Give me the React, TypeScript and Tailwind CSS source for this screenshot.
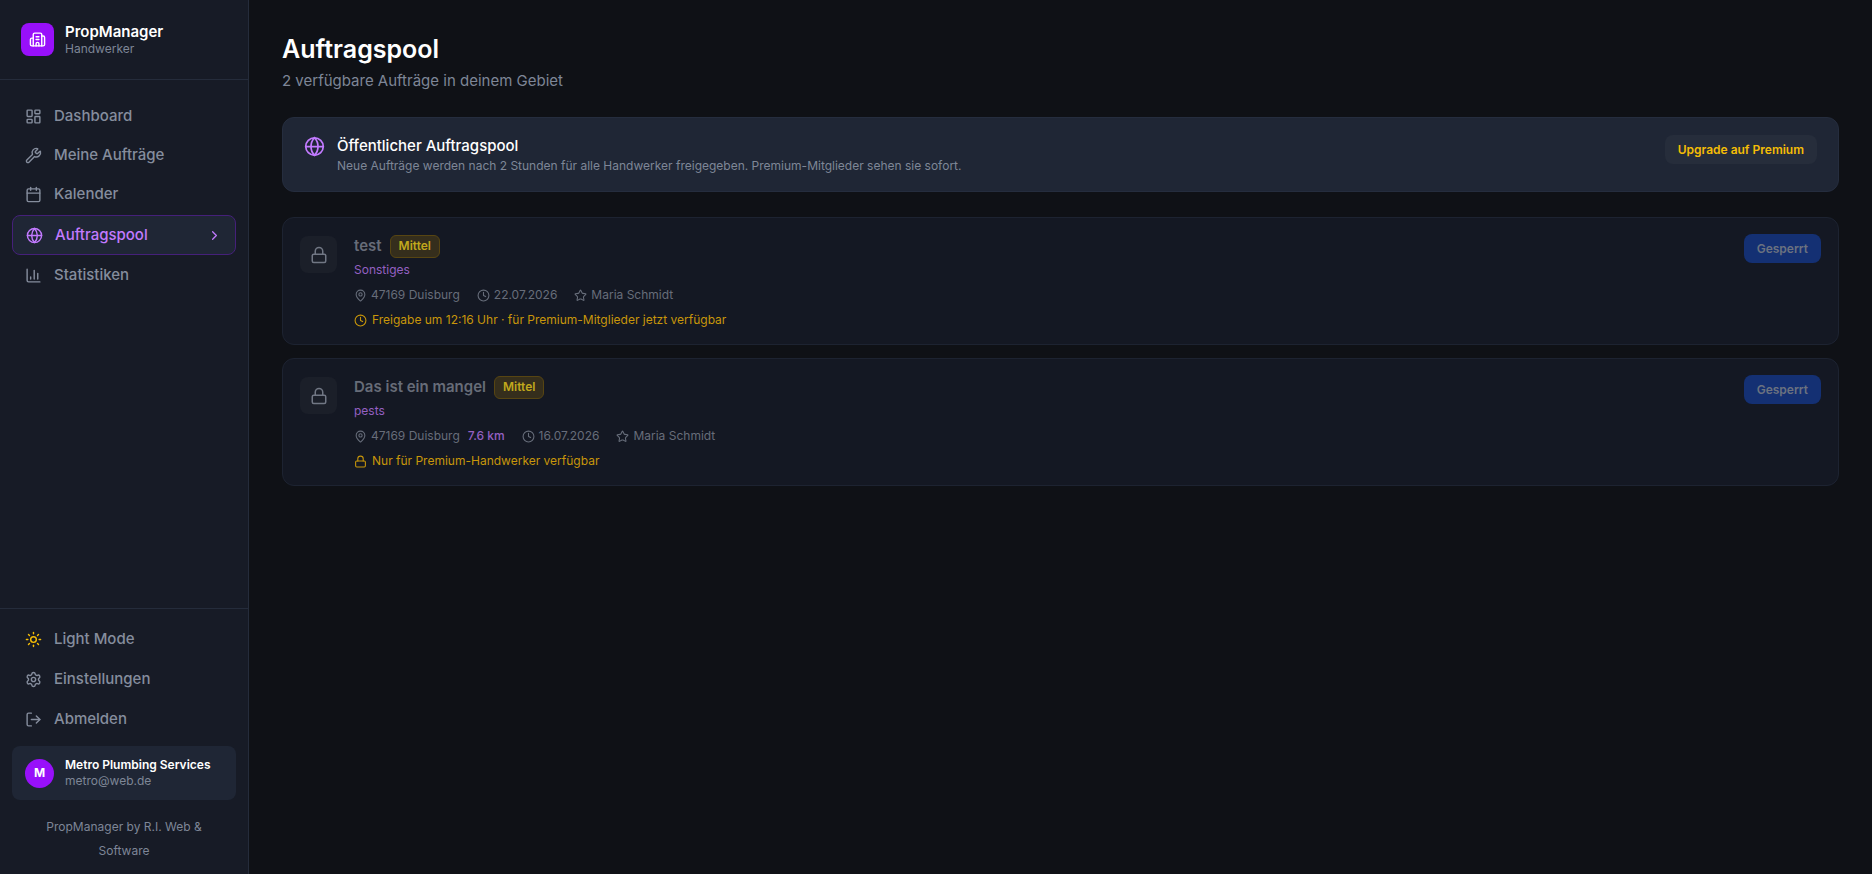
import type { ReactNode } from "react";
import {
  Building2,
  Calendar,
  ChartColumn,
  ChevronRight,
  Clock,
  Globe,
  LayoutDashboard,
  Lock,
  LogOut,
  MapPin,
  Settings,
  Star,
  Sun,
  Wrench,
} from "lucide-react";
import type { LucideIcon } from "lucide-react";

type NavEntry = { label: string; icon: LucideIcon; active?: boolean };

const navigation: NavEntry[] = [
  { label: "Dashboard", icon: LayoutDashboard },
  { label: "Meine Aufträge", icon: Wrench },
  { label: "Kalender", icon: Calendar },
  { label: "Auftragspool", icon: Globe, active: true },
  { label: "Statistiken", icon: ChartColumn },
];

type Job = {
  title: string;
  priority: string;
  category: string;
  place: string;
  distance?: string;
  date: string;
  client: string;
  noticeIcon: LucideIcon;
  notice: string;
};

const jobs: Job[] = [
  {
    title: "test",
    priority: "Mittel",
    category: "Sonstiges",
    place: "47169 Duisburg",
    date: "22.07.2026",
    client: "Maria Schmidt",
    noticeIcon: Clock,
    notice: "Freigabe um 12:16 Uhr · für Premium-Mitglieder jetzt verfügbar",
  },
  {
    title: "Das ist ein mangel",
    priority: "Mittel",
    category: "pests",
    place: "47169 Duisburg",
    distance: "7.6 km",
    date: "16.07.2026",
    client: "Maria Schmidt",
    noticeIcon: Lock,
    notice: "Nur für Premium-Handwerker verfügbar",
  },
];

function NavLink({ label, icon: Icon, active }: NavEntry) {
  if (active) {
    return (
      <a
        href="#"
        aria-current="page"
        className="flex h-10 items-center gap-3 rounded-lg border border-[#45207a] bg-[#1f2635] px-[13px] text-[15px] font-medium text-[#c27aff]"
      >
        <Icon size={17} />
        <span className="flex-1">{label}</span>
        <ChevronRight size={15} />
      </a>
    );
  }
  return (
    <a href="#" className="flex h-[37px] items-center gap-3 rounded-lg px-[13px] text-[15px] font-medium text-[#858d9d]">
      <Icon size={17} />
      <span>{label}</span>
    </a>
  );
}

function ActionButton({ icon, children }: { icon: ReactNode; children: ReactNode }) {
  return (
    <button
      type="button"
      className="flex h-[37px] items-center gap-3 rounded-lg px-[13px] text-left text-[15px] font-medium text-[#858d9d]"
    >
      {icon}
      <span>{children}</span>
    </button>
  );
}

function Sidebar() {
  return (
    <aside className="flex w-[249px] shrink-0 flex-col border-r border-[#252c3b] bg-[#171b26]">
      <div className="flex h-20 items-center gap-[11px] border-b border-[#252c3b] px-[21px]">
        <div className="flex size-[33px] items-center justify-center rounded-lg bg-[#9810fa] text-white">
          <Building2 size={17} />
        </div>
        <div>
          <p className="text-[15px] leading-[18px] font-semibold text-white">PropManager</p>
          <p className="text-xs leading-4 text-[#7e8697]">Handwerker</p>
        </div>
      </div>

      <nav className="flex flex-1 flex-col gap-[2px] px-3 pt-[18px]">
        {navigation.map((entry) => (
          <NavLink key={entry.label} {...entry} />
        ))}
      </nav>

      <div className="flex flex-col gap-[3px] border-t border-[#252c3b] px-3 pt-3 pb-[11px]">
        <ActionButton icon={<Sun size={17} className="text-[#f5bd05]" />}>Light Mode</ActionButton>
        <ActionButton icon={<Settings size={17} />}>Einstellungen</ActionButton>
        <ActionButton icon={<LogOut size={17} />}>Abmelden</ActionButton>
        <div className="mt-[5px] flex h-[54px] items-center gap-[11px] rounded-lg bg-[#1f2635] px-[13px]">
          <div className="flex size-[29px] items-center justify-center rounded-full bg-[#9810fa] text-xs font-bold text-white">
            M
          </div>
          <div>
            <p className="text-xs leading-4 font-semibold text-white">Metro Plumbing Services</p>
            <p className="text-xs leading-4 text-[#7e8697]">metro@web.de</p>
          </div>
        </div>
        <p className="px-6 pt-3 text-center text-xs leading-6 text-[#7e8697]">PropManager by R.I. Web &amp; Software</p>
      </div>
    </aside>
  );
}

function PoolBanner() {
  return (
    <section className="mt-[25px] flex h-[75px] items-start gap-3 rounded-xl border border-[#252d3e] bg-[#1f2635] px-[21px] pt-[17px]">
      <Globe size={21} className="mt-px shrink-0 text-[#c27aff]" />
      <div className="flex-1">
        <h2 className="text-[15px] leading-[22px] font-medium text-white">Öffentlicher Auftragspool</h2>
        <p className="text-xs leading-[18px] text-[#7e8697]">
          Neue Aufträge werden nach 2 Stunden für alle Handwerker freigegeben. Premium-Mitglieder sehen sie sofort.
        </p>
      </div>
      <button type="button" className="h-[29px] rounded-lg bg-[#262d3b] px-[13px] text-xs font-semibold text-[#f5bd05]">
        Upgrade auf Premium
      </button>
    </section>
  );
}

function Meta({ icon: Icon, children }: { icon: LucideIcon; children: ReactNode }) {
  return (
    <span className="flex items-center gap-1">
      <Icon size={13} />
      {children}
    </span>
  );
}

function JobCard({ job }: { job: Job }) {
  const NoticeIcon = job.noticeIcon;
  return (
    <article className="flex h-32 items-start gap-[17px] rounded-xl border border-[#1d2331] bg-[#141823] px-[17px] pt-4">
      <div className="mt-[2px] flex size-[37px] items-center justify-center rounded-lg bg-[#1b1f29] text-[#717784]">
        <Lock size={18} />
      </div>
      <div className="flex-1">
        <div className="flex h-6 items-center gap-2">
          <h3 className="text-[15px] font-semibold text-[#676c78]">{job.title}</h3>
          <span className="flex h-[23px] items-center rounded-md border border-[#574512] bg-[#352e1c] px-2 text-xs font-semibold text-[#c0a81c]">
            {job.priority}
          </span>
        </div>
        <p className="mt-[3px] text-xs leading-[18px] text-[#9460c2]">{job.category}</p>
        <div className="mt-[7px] flex h-[18px] items-center gap-[17px] text-xs text-[#676d7a]">
          <span className="flex items-center gap-2">
            <Meta icon={MapPin}>{job.place}</Meta>
            {job.distance && <span className="font-medium text-[#9460c2]">{job.distance}</span>}
          </span>
          <Meta icon={Clock}>{job.date}</Meta>
          <Meta icon={Star}>{job.client}</Meta>
        </div>
        <p className="mt-[7px] flex h-[18px] items-center gap-[5px] text-xs text-[#c8960a]">
          <NoticeIcon size={13} />
          {job.notice}
        </p>
      </div>
      <button type="button" disabled className="h-[29px] rounded-lg bg-[#143073] px-[13px] text-xs font-semibold text-[#6b7280]">
        Gesperrt
      </button>
    </article>
  );
}

export default function App() {
  return (
    <div className="flex min-h-screen bg-[#0f1116] font-[Inter,sans-serif]">
      <Sidebar />
      <main className="flex-1 px-[33px] pt-8 pb-8">
        <h1 className="text-[25px] leading-[34px] font-semibold text-white">Auftragspool</h1>
        <p className="mt-1 text-[15px] leading-[22px] text-[#7e8697]">2 verfügbare Aufträge in deinem Gebiet</p>
        <PoolBanner />
        <div className="mt-[25px] flex flex-col gap-[13px]">
          {jobs.map((job) => (
            <JobCard key={job.title} job={job} />
          ))}
        </div>
      </main>
    </div>
  );
}
